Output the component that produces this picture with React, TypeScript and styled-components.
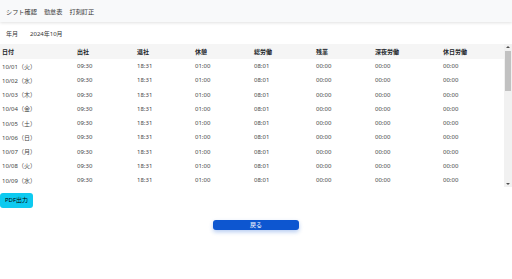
import styled, { createGlobalStyle } from "styled-components";

const GlobalStyle = createGlobalStyle`
  body {
    margin: 0;
    background: #ffffff;
    font-family: "Noto Sans", "Noto Sans CJK JP", sans-serif;
    color: #212529;
  }
`;

const WEEK = ["日", "月", "火", "水", "木", "金", "土"];

// 2024年10月の勤怠データ（ダミー）
const rows = Array.from({ length: 31 }, (_, i) => {
  const day = i + 1;
  const dow = WEEK[new Date(2024, 9, day).getDay()];
  return {
    date: `10/${String(day).padStart(2, "0")}（${dow}）`,
    start: "09:30",
    end: "18:31",
    rest: "01:00",
    total: "08:01",
    over: "00:00",
    night: "00:00",
    holiday: "00:00",
  };
});

const columns = [
  { label: "日付", width: 75 },
  { label: "出社", width: 60 },
  { label: "退社", width: 58 },
  { label: "休憩", width: 59 },
  { label: "総労働", width: 62 },
  { label: "残業", width: 59 },
  { label: "深夜労働", width: 68 },
  { label: "休日労働", width: 63 },
];

const App = () => {
  return (
    <Page>
      <GlobalStyle />
      <NavBar>
        <NavLink>シフト確認</NavLink>
        <NavLink>勤怠表</NavLink>
        <NavLink>打刻訂正</NavLink>
      </NavBar>
      <MonthRow>
        <span>年月</span>
        <span>2024年10月</span>
      </MonthRow>
      <TableArea>
        <TableWrap>
          <Table>
            <colgroup>
              {columns.map((c) => (
                <col key={c.label} style={{ width: c.width }} />
              ))}
            </colgroup>
            <thead>
              <tr>
                {columns.map((c) => (
                  <Th key={c.label}>{c.label}</Th>
                ))}
              </tr>
            </thead>
            <tbody>
              {rows.map((r) => (
                <tr key={r.date}>
                  <Td>{r.date}</Td>
                  <Td>{r.start}</Td>
                  <Td>{r.end}</Td>
                  <Td>{r.rest}</Td>
                  <Td>{r.total}</Td>
                  <Td>{r.over}</Td>
                  <Td>{r.night}</Td>
                  <Td>{r.holiday}</Td>
                </tr>
              ))}
            </tbody>
          </Table>
        </TableWrap>
        <ScrollTrack>
          <Arrow $down={false} />
          <Thumb />
          <Arrow $down />
        </ScrollTrack>
      </TableArea>
      <PdfButton>PDF出力</PdfButton>
      <Footer>
        <BackButton>戻る</BackButton>
      </Footer>
    </Page>
  );
};

export default App;

const Page = styled.div`
  width: 512px;
  height: 279px;
  display: flex;
  flex-direction: column;
  overflow: hidden;
`;

const NavBar = styled.nav`
  height: 22px;
  flex-shrink: 0;
  display: flex;
  align-items: center;
  gap: 6px;
  padding: 0 6px;
  background: #f8f9fa;
  box-shadow: 0 1px 3px rgba(0, 0, 0, 0.12);
  position: relative;
  z-index: 1;
`;

const NavLink = styled.span`
  font-size: 6.2px;
  color: #333333;
  padding-right: 1px;
`;

const MonthRow = styled.div`
  height: 22px;
  display: flex;
  align-items: center;
  gap: 12px;
  padding: 0 6px;
  font-size: 6px;
  color: #333333;
`;

const TableArea = styled.div`
  height: 143px;
  flex-shrink: 0;
  display: flex;
`;

const TableWrap = styled.div`
  flex: 1;
  overflow-y: auto;
  scrollbar-width: none;
`;

const ScrollTrack = styled.div`
  width: 8px;
  display: flex;
  flex-direction: column;
  align-items: center;
  background: #f1f1f1;
  padding: 2px 0;
  box-sizing: border-box;
`;

const Arrow = styled.div<{ $down: boolean }>`
  width: 0;
  height: 0;
  border-left: 2px solid transparent;
  border-right: 2px solid transparent;
  ${(p) =>
    p.$down
      ? "border-top: 2px solid #505050; margin-top: auto;"
      : "border-bottom: 2px solid #505050;"}
`;

const Thumb = styled.div`
  width: 6px;
  height: 40px;
  margin-top: 3px;
  background: #c1c1c1;
`;

const Table = styled.table`
  width: 100%;
  table-layout: fixed;
  border-collapse: collapse;
`;

const Th = styled.th`
  height: 15px;
  padding: 0 0 0 2px;
  text-align: left;
  font-size: 6px;
  font-weight: 700;
  color: #212529;
  background: #f5f5f5;
`;

const Td = styled.td`
  height: 14.25px;
  padding: 0 0 0 2px;
  font-size: 6px;
  color: #444444;
  white-space: nowrap;
`;

const PdfButton = styled.button`
  align-self: flex-start;
  margin-top: 6px;
  width: 33px;
  height: 15px;
  padding: 0;
  border: none;
  border-radius: 3px;
  background: #0dcaf0;
  color: #000000;
  font-family: "Noto Sans", "Noto Sans CJK JP", sans-serif;
  font-size: 6px;
  line-height: 15px;
`;

const Footer = styled.div`
  display: flex;
  justify-content: center;
  padding-top: 12px;
`;

const BackButton = styled.button`
  width: 86px;
  height: 10px;
  padding: 0;
  border: none;
  border-radius: 3px;
  background: #0d56d0;
  color: #ffffff;
  font-family: "Noto Sans", "Noto Sans CJK JP", sans-serif;
  font-size: 6px;
  line-height: 10px;
  box-shadow: 0 2px 4px rgba(13, 86, 208, 0.3);
`;
